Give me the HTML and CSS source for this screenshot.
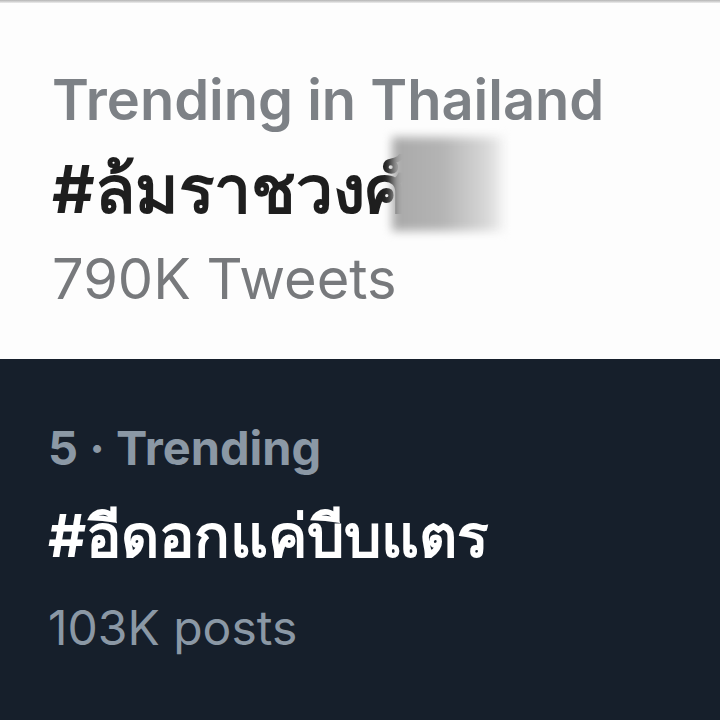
FILE: index.html
```html
<!DOCTYPE html>
<html>
<head>
<meta charset="utf-8">
<link rel="stylesheet" href="styles.css">
</head>
<body>
<div class="page">
  <section class="light">
    <div class="topline"></div>
    <div class="item light-item">
      <div class="meta">Trending in Thailand</div>
      <div class="tag"><span class="tag-text">#ล้มราชวงศ์<span class="hidden">ฯ</span><span class="blur"></span></span></div>
      <div class="count">790K Tweets</div>
    </div>
  </section>
  <section class="dark">
    <div class="item dark-item">
      <div class="meta">5 · Trending</div>
      <div class="tag">#อีดอกแค่บีบแตร</div>
      <div class="count">103K posts</div>
    </div>
  </section>
</div>
</body>
</html>
```
FILE: styles.css
```css
html, body { margin: 0; padding: 0; }
body { width: 720px; height: 720px; overflow: hidden; font-family: "Inter", "Noto Sans", sans-serif; }
.page { display: flex; flex-direction: column; height: 720px; }
.light { background: #fdfdfd; height: 359px; }
.topline { height: 3px; background: linear-gradient(#b4b4b4, #ededed); }
.light-item { padding: 62px 0 0 52px; }
.light-item .meta { font-size: 56px; font-weight: 600; color: #7d8186; line-height: 70px; white-space: nowrap; }
.light-item .tag { font-size: 66px; font-weight: 700; color: #1e1e1e; line-height: 109px; white-space: nowrap; }
.tag-text { position: relative; }
.hidden { color: #1e1e1e; }
.blur { position: absolute; left: 340px; top: -12px; width: 112px; height: 94px; background: linear-gradient(90deg, #a9a9a9 0%, #b4b4b4 45%, #d8d8d8 85%, #f4f4f4 100%); filter: blur(5px); }
.light-item .count { font-size: 56px; font-weight: 400; color: #77797c; line-height: 71px; }
.dark { background: #161f2b; flex: 1; }
.dark-item { padding: 59px 0 0 48px; }
.dark-item .meta { font-size: 47px; font-weight: 700; color: #8b98a5; line-height: 60px; }
.dark-item .tag { font-size: 59px; font-weight: 700; color: #ffffff; line-height: 115px; white-space: nowrap; }
.dark-item .count { font-size: 48px; font-weight: 400; color: #8b98a5; line-height: 69px; }
```
